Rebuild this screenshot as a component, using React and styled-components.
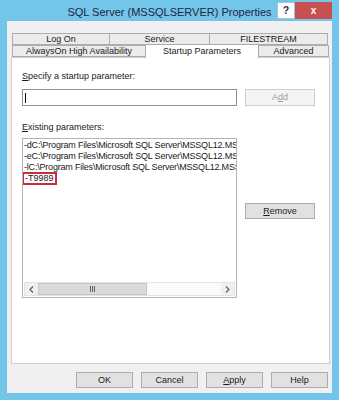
import React from "react";
import styled, { createGlobalStyle } from "styled-components";

const GlobalStyle = createGlobalStyle`
  html, body {
    margin: 0;
    padding: 0;
    background: #74c5ea;
  }
  body {
    font-family: "Liberation Sans", Arial, sans-serif;
    color: #1a1a1a;
  }
`;

const Window = styled.div`
  width: 339px;
  height: 400px;
  box-sizing: border-box;
  background: #74c5ea;
  padding: 0 7px 7px 7px;
  display: flex;
  flex-direction: column;
`;

const TitleBar = styled.div`
  height: 21px;
  flex: none;
  display: grid;
  grid-template-columns: 1fr auto 1fr;
  align-items: start;
`;

const Title = styled.div`
  grid-column: 2;
  font-size: 11px;
  line-height: 13px;
  padding-top: 6px;
  color: #1c2640;
  white-space: nowrap;
`;

const Captions = styled.div`
  grid-column: 3;
  justify-self: end;
  display: flex;
  margin-top: 2px;
`;

const CaptionButton = styled.div`
  width: ${p => p.$w}px;
  height: 17px;
  box-sizing: border-box;
  display: flex;
  align-items: center;
  justify-content: center;
  background: ${p => (p.$close ? "#c75050" : "#ffffff")};
  border: 1px solid ${p => (p.$close ? "#c75050" : "#9fc6dc")};
  color: ${p => (p.$close ? "#ffffff" : "#1c2640")};
  font-weight: bold;
  font-size: 10px;
`;

const Client = styled.div`
  flex: 1;
  background: #f0f0f0;
  padding: 12px 2px 0 4px;
  display: flex;
  flex-direction: column;
`;

const TabStrip = styled.div`
  margin: 0 3px 0 1px;
  display: flex;
  flex-direction: column;
`;

const TabRow = styled.div`
  display: grid;
  grid-template-columns: ${p => p.$cols};
`;

const Tab = styled.div`
  height: ${p => (p.$selected ? 14 : 12)}px;
  margin-top: ${p => (p.$selected ? -1 : 0)}px;
  margin-bottom: ${p => (p.$selected ? -2 : 0)}px;
  position: ${p => (p.$selected ? "relative" : "static")};
  z-index: ${p => (p.$selected ? 1 : 0)};
  box-sizing: border-box;
  border: 1px solid #adadad;
  border-bottom: ${p => (p.$selected ? "none" : "1px solid #adadad")};
  margin-left: ${p => (p.$first ? 0 : -1)}px;
  background: ${p => (p.$selected ? "#ffffff" : "#ebebeb")};
  font-size: 9px;
  line-height: ${p => (p.$selected ? 12 : 10)}px;
  text-align: center;
  white-space: nowrap;
  color: #1a1a1a;
`;

const Panel = styled.div`
  height: 307px;
  box-sizing: border-box;
  background: #ffffff;
  border: 1px solid #cfcfcf;
  padding: 13px 14px 0 10px;
  display: grid;
  grid-template-columns: 215px 70px;
  column-gap: 8px;
  align-content: start;
  align-items: start;
`;

const Label = styled.div`
  grid-column: 1 / -1;
  font-size: 9px;
  line-height: 11px;
  margin-top: ${p => p.$mt || 0}px;
  color: #1a1a1a;
`;

const TextInput = styled.div`
  margin-top: 7px;
  height: 17px;
  box-sizing: border-box;
  border: 1px solid #8f8f8f;
  background: #fff;
  display: flex;
  align-items: center;
  padding-left: 2px;
`;

const Caret = styled.span`
  width: 1px;
  height: 10px;
  background: #000;
`;

const Button = styled.div`
  width: ${p => p.$w || 70}px;
  height: ${p => p.$h || 16}px;
  margin-top: ${p => p.$mt || 0}px;
  box-sizing: border-box;
  border: 1px solid ${p => (p.$disabled ? "#cfcfcf" : "#adadad")};
  background: ${p => (p.$disabled ? "#f4f4f4" : "#e1e1e1")};
  color: ${p => (p.$disabled ? "#9c9c9c" : "#1a1a1a")};
  font-size: 9px;
  line-height: ${p => (p.$h || 16) - 2}px;
  text-align: center;
`;

const ListBox = styled.div`
  margin-top: 5px;
  height: 160px;
  box-sizing: border-box;
  border: 1px solid #b4b4b4;
  background: #fff;
  display: flex;
  flex-direction: column;
`;

const Items = styled.div`
  flex: 1;
  overflow: hidden;
  padding: 1px 0 0 1px;
  white-space: nowrap;
  font-size: 9px;
  line-height: 11px;
  letter-spacing: -0.2px;
`;

const Item = styled.div`
  height: 11px;
`;

const Marked = styled.span`
  display: inline-block;
  line-height: 9px;
  padding: 0 1px;
  margin-top: 1px;
  letter-spacing: 0;
  outline: 2px solid #d12a3c;
`;

const HScroll = styled.div`
  height: 14px;
  margin: 0 1px 1px 1px;
  box-sizing: border-box;
  border: 1px solid #e3e3e3;
  background: #f0f0f0;
  display: flex;
`;

const Arrow = styled.div`
  width: 13px;
  display: flex;
  align-items: center;
  justify-content: center;
  background: #f0f0f0;
`;

const Thumb = styled.div`
  width: 109px;
  box-sizing: border-box;
  background: #dadada;
  border: 1px solid #c6c6c6;
  display: flex;
  align-items: center;
  justify-content: center;
  gap: 1px;
`;

const Grip = styled.span`
  width: 1px;
  height: 6px;
  background: #606060;
`;

const Track = styled.div`
  flex: 1;
  background: #fbfbfb;
`;

const Footer = styled.div`
  margin: 8px 2px 0 0;
  display: flex;
  justify-content: flex-end;
  gap: 8px;
`;

const Chevron = ({ dir }) => (
  <svg width="5" height="7" viewBox="0 0 5 7">
    <path
      d={dir === "left" ? "M4 0.5 L1 3.5 L4 6.5" : "M1 0.5 L4 3.5 L1 6.5"}
      fill="none"
      stroke="#606060"
      strokeWidth="1.2"
    />
  </svg>
);

const params = [
  "-dC:\\Program Files\\Microsoft SQL Server\\MSSQL12.MSSQLSERVER\\MSSQL\\DATA\\master.mdf",
  "-eC:\\Program Files\\Microsoft SQL Server\\MSSQL12.MSSQLSERVER\\MSSQL\\Log\\ERRORLOG",
  "-lC:\\Program Files\\Microsoft SQL Server\\MSSQL12.MSSQLSERVER\\MSSQL\\DATA\\mastlog.ldf",
];

const App = () => (
  <Window>
    <GlobalStyle />
    <TitleBar>
      <Title>SQL Server (MSSQLSERVER) Properties</Title>
      <Captions>
        <CaptionButton $w={18}>?</CaptionButton>
        <CaptionButton $w={37} $close>
          x
        </CaptionButton>
      </Captions>
    </TitleBar>
    <Client>
      <TabStrip>
        <TabRow $cols="98px 100px 118px">
          <Tab $first>Log On</Tab>
          <Tab>Service</Tab>
          <Tab>FILESTREAM</Tab>
        </TabRow>
        <TabRow $cols="134px 113px 70px">
          <Tab $first>AlwaysOn High Availability</Tab>
          <Tab $selected>Startup Parameters</Tab>
          <Tab>Advanced</Tab>
        </TabRow>
      </TabStrip>
      <Panel>
        <Label>
          <u>S</u>pecify a startup parameter:
        </Label>
        <TextInput>
          <Caret />
        </TextInput>
        <Button $disabled $mt={7} $h={17}>
          A<u>d</u>d
        </Button>
        <Label $mt={16}>
          <u>E</u>xisting parameters:
        </Label>
        <ListBox>
          <Items>
            {params.map(p => (
              <Item key={p}>{p}</Item>
            ))}
            <Item>
              <Marked>-T9989</Marked>
            </Item>
          </Items>
          <HScroll>
            <Arrow>
              <Chevron dir="left" />
            </Arrow>
            <Thumb>
              <Grip />
              <Grip />
              <Grip />
            </Thumb>
            <Track />
            <Arrow>
              <Chevron dir="right" />
            </Arrow>
          </HScroll>
        </ListBox>
        <Button $mt={70}>
          <u>R</u>emove
        </Button>
      </Panel>
      <Footer>
        <Button $w={57}>OK</Button>
        <Button $w={57}>Cancel</Button>
        <Button $w={57}>
          <u>A</u>pply
        </Button>
        <Button $w={57}>Help</Button>
      </Footer>
    </Client>
  </Window>
);

export default App;
